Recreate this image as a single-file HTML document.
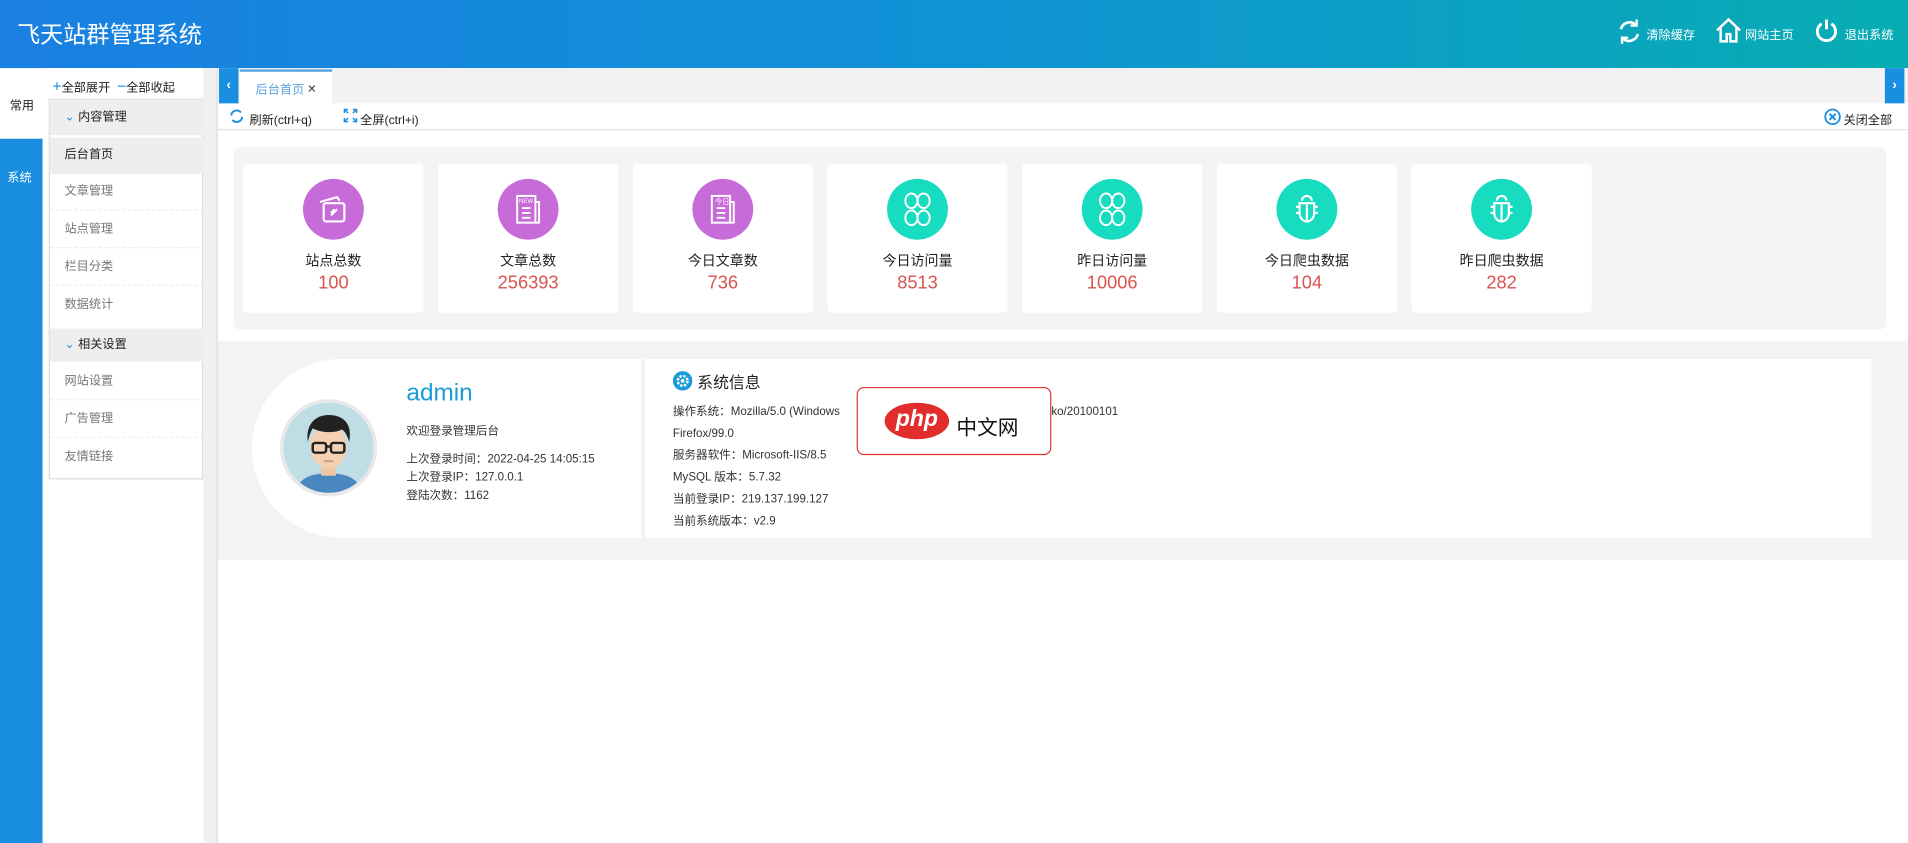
<!DOCTYPE html>
<html><head><meta charset="utf-8"><style>
*{margin:0;padding:0;box-sizing:border-box}
html,body{width:1908px;height:843px;overflow:hidden;background:#fff}
#w{width:1568px;height:693px;transform:scale(1.21684);transform-origin:0 0;position:relative;font-family:"Liberation Sans","Noto Sans CJK SC",sans-serif;font-size:11px;color:#333}
.a{position:absolute}
.hd{left:0;top:0;width:1568px;height:56px;background:linear-gradient(90deg,#1a80e2 0%,#1190d8 45%,#07adb3 100%)}
.hd .t{left:14px;top:14px;color:#fff;font-size:19px}
.hd .r{color:#fff;font-size:10px;top:20px}
.menu div{position:absolute;left:0;width:126px;height:30px;line-height:30px;padding-left:12px;color:#777;font-size:10px;border-bottom:1px dashed #eee}
.card{position:absolute;top:135px;width:148px;height:122px;background:#fff;border-radius:3px;text-align:center}
.card .c{width:50px;height:50px;border-radius:50%;margin:12px auto 0;display:flex;align-items:center;justify-content:center}
.card .l{margin-top:9px;font-size:11.5px;color:#222}
.card .n{font-size:15px;color:#d9534f;margin-top:2px}
.p{background:#c66bd8}.g{background:#17dcbf}
.si div{height:18px;line-height:18px;font-size:9.5px;color:#333}
</style></head><body><div id="w">
<div class="a hd"><div class="a t">飞天站群管理系统</div>
<svg class="a" style="left:1328px;top:15px" width="22" height="22" viewBox="0 0 22 22" fill="none" stroke="#fff" stroke-width="2.2"><path d="M4 9a7.5 7.5 0 0 1 13-3"/><path d="M18 13a7.5 7.5 0 0 1-13 3"/><path d="M17 1v5h-5" stroke-width="2"/><path d="M5 21v-5h5" stroke-width="2"/></svg>
<div class="a r" style="left:1353px">清除缓存</div>
<svg class="a" style="left:1409px;top:14px" width="23" height="22" viewBox="0 0 23 22" fill="none" stroke="#fff" stroke-width="2"><path d="M2 11L11.5 2 21 11"/><path d="M5 9v11h5v-6h3v6h5V9"/></svg>
<div class="a r" style="left:1434px">网站主页</div>
<svg class="a" style="left:1491px;top:15px" width="20" height="20" viewBox="0 0 20 20" fill="none" stroke="#fff" stroke-width="2.4"><path d="M6 4.5a7.5 7.5 0 1 0 8 0"/><path d="M10 1v8"/></svg>
<div class="a r" style="left:1516px">退出系统</div>
</div>
<div class="a" style="left:0;top:56px;width:35px;height:637px;background:#1a8ee0"></div>
<div class="a" style="left:0;top:56px;width:35px;height:58px;background:#fff"></div>
<div class="a" style="left:8px;top:78px;font-size:10px;color:#222">常用</div>
<div class="a" style="left:6px;top:137px;font-size:10px;color:#fff">系统</div>
<div class="a" style="left:35px;top:56px;width:144px;height:637px;background:#fff"></div>
<div class="a" style="left:167px;top:56px;width:12px;height:637px;background:#f0f0f0;border-right:1px solid #ddd"></div>
<div class="a" style="left:43px;top:63px;font-size:10px;color:#222"><span style="color:#1a8ee0;font-size:13px">+</span>全部展开 &nbsp;<span style="color:#1a8ee0;font-size:13px">−</span>全部收起</div>
<div class="a menu" style="left:40px;top:81px;width:127px;height:313px;border:1px solid #ddd;background:#fff">
<div style="top:0;height:29px;background:#eee;color:#222;border:0"><span style="color:#1a8ee0">⌄</span> 内容管理</div>
<div style="top:31px;background:#eee;color:#222;border:0">后台首页</div>
<div style="top:61px">文章管理</div>
<div style="top:92px">站点管理</div>
<div style="top:123px">栏目分类</div>
<div style="top:154px;border:0">数据统计</div>
<div style="top:188px;height:27px;line-height:27px;background:#eee;color:#222;border:0"><span style="color:#1a8ee0">⌄</span> 相关设置</div>
<div style="top:217px">网站设置</div>
<div style="top:248px">广告管理</div>
<div style="top:279px;border:0">友情链接</div>
</div>
<div class="a" style="left:179px;top:56px;width:1389px;height:29px;background:#f2f2f2"></div>
<div class="a" style="left:180px;top:56px;width:16px;height:29px;background:#1a8ee0;color:#fff;font-size:11px;line-height:29px;text-align:center;font-weight:bold">‹</div>
<div class="a" style="left:1549px;top:56px;width:16px;height:29px;background:#1a8ee0;color:#fff;font-size:11px;line-height:29px;text-align:center;font-weight:bold">›</div>
<div class="a" style="left:197px;top:57px;width:76px;height:28px;background:#fff;border-top:2px solid #5aa2e0;line-height:28px;padding-left:13px;color:#5aa2e0;font-size:10px">后台首页 <span style="color:#333;font-size:12px">×</span></div>
<div class="a" style="left:179px;top:85px;width:1389px;height:22px;background:#fff;border-bottom:1px solid #e2e2e2"></div>
<svg class="a" style="left:188px;top:89px" width="13" height="13" viewBox="0 0 13 13" fill="none" stroke="#1a8ee0" stroke-width="1.6"><path d="M2 6a4.5 4.5 0 0 1 8-2.5M11 7a4.5 4.5 0 0 1-8 2.5"/></svg>
<div class="a" style="left:205px;top:90px;font-size:10px;color:#222">刷新(ctrl+q)</div>
<svg class="a" style="left:282px;top:89px" width="12" height="12" viewBox="0 0 12 12" fill="none" stroke="#1a8ee0" stroke-width="1.2"><path d="M1 4V1h3M8 1h3v3M11 8v3H8M4 11H1V8M1 1l3 3M11 1L8 4M11 11L8 8M1 11l3-3"/></svg>
<div class="a" style="left:296px;top:90px;font-size:10px;color:#222">全屏(ctrl+i)</div>
<svg class="a" style="left:1499px;top:89px" width="14" height="14" viewBox="0 0 14 14"><circle cx="7" cy="7" r="6" fill="none" stroke="#1a8ee0" stroke-width="1.5"/><path d="M4.5 4.5l5 5M9.5 4.5l-5 5" stroke="#1a8ee0" stroke-width="1.6"/></svg>
<div class="a" style="left:1515px;top:90px;font-size:10px;color:#222">关闭全部</div>
<div class="a" style="left:192px;top:121px;width:1358px;height:150px;background:#f4f4f4;border-radius:6px"></div>
<div class="card" style="left:200px"><div class="c p"><svg width="28" height="26" viewBox="0 0 28 26" fill="none" stroke="#fff" stroke-width="1.8"><path d="M3 7l14-4 2 3"/><rect x="6" y="8" width="17" height="15" rx="2"/><path d="M12 18l5-5M12 16l3-3" /></svg></div><div class="l">站点总数</div><div class="n">100</div></div>
<div class="card" style="left:360px"><div class="c p"><svg width="26" height="28" viewBox="0 0 26 28" fill="none" stroke="#fff" stroke-width="1.6"><rect x="4" y="3" width="15" height="22"/><path d="M19 8h3v17h-3M8 13h7M8 17h7M8 21h7"/><text x="5.5" y="9" font-size="5" fill="#fff" stroke="none" font-family="Liberation Sans">NEW</text></svg></div><div class="l">文章总数</div><div class="n">256393</div></div>
<div class="card" style="left:520px"><div class="c p"><svg width="26" height="28" viewBox="0 0 26 28" fill="none" stroke="#fff" stroke-width="1.6"><rect x="4" y="3" width="15" height="22"/><path d="M19 8h3v17h-3M8 13h7M8 17h7M8 21h7"/><text x="6.5" y="9.5" font-size="6" fill="#fff" stroke="none" font-family="Noto Sans CJK SC">今日</text></svg></div><div class="l">今日文章数</div><div class="n">736</div></div>
<div class="card" style="left:680px"><div class="c g"><svg width="28" height="32" viewBox="0 0 28 32" fill="none" stroke="#fff" stroke-width="1.6"><ellipse cx="9" cy="9" rx="5" ry="6"/><ellipse cx="19" cy="9" rx="5" ry="6"/><ellipse cx="9" cy="23" rx="5" ry="6"/><ellipse cx="19" cy="23" rx="5" ry="6"/></svg></div><div class="l">今日访问量</div><div class="n">8513</div></div>
<div class="card" style="left:840px"><div class="c g"><svg width="28" height="32" viewBox="0 0 28 32" fill="none" stroke="#fff" stroke-width="1.6"><ellipse cx="9" cy="9" rx="5" ry="6"/><ellipse cx="19" cy="9" rx="5" ry="6"/><ellipse cx="9" cy="23" rx="5" ry="6"/><ellipse cx="19" cy="23" rx="5" ry="6"/></svg></div><div class="l">昨日访问量</div><div class="n">10006</div></div>
<div class="card" style="left:1000px"><div class="c g"><svg width="26" height="28" viewBox="0 0 26 28" fill="none" stroke="#fff" stroke-width="1.8"><path d="M9 7a4 4 0 0 1 8 0"/><path d="M7 9h12v8a6 7 0 0 1-12 0z"/><path d="M13 10v13M4 12h3M4 17h3M19 12h3M19 17h3"/></svg></div><div class="l">今日爬虫数据</div><div class="n">104</div></div>
<div class="card" style="left:1160px"><div class="c g"><svg width="26" height="28" viewBox="0 0 26 28" fill="none" stroke="#fff" stroke-width="1.8"><path d="M9 7a4 4 0 0 1 8 0"/><path d="M7 9h12v8a6 7 0 0 1-12 0z"/><path d="M13 10v13M4 12h3M4 17h3M19 12h3M19 17h3"/></svg></div><div class="l">昨日爬虫数据</div><div class="n">282</div></div>
<div class="a" style="left:179px;top:280px;width:1389px;height:180px;background:#f3f3f3"></div>
<div class="a" style="left:207px;top:295px;width:320px;height:147px;background:#fff;border-radius:80px 0 0 80px"></div>
<div class="a" style="left:530px;top:295px;width:1008px;height:147px;background:#fff"></div>
<div class="a" style="left:230px;top:328px;width:80px;height:80px;border-radius:50%;background:#bfdde4;border:3px solid #e8e8e8;overflow:hidden">
<svg width="74" height="74" viewBox="0 0 74 74"><path d="M10 74c2-12 12-16 27-16s25 4 27 16z" fill="#4a86c0"/><rect x="31" y="48" width="12" height="12" fill="#efc6a6"/><ellipse cx="37" cy="36" rx="15" ry="18" fill="#f5d1b3"/><path d="M20 32c-2-14 6-22 17-22s20 6 17 22c-2-6-4-9-6-10-6 3-16 3-24-1-2 3-3 7-4 11z" fill="#222"/><rect x="24" y="33" width="11" height="8" rx="2" fill="none" stroke="#222" stroke-width="2"/><rect x="39" y="33" width="11" height="8" rx="2" fill="none" stroke="#222" stroke-width="2"/><path d="M35 36h4" stroke="#222" stroke-width="2"/><path d="M33 48h8" stroke="#c98" stroke-width="1.5"/></svg></div>
<div class="a" style="left:334px;top:312px;font-size:20px;color:#1a9bd8">admin</div>
<div class="a" style="left:334px;top:346px;font-size:9.5px">欢迎登录管理后台</div>
<div class="a" style="left:334px;top:370px;font-size:9.5px;line-height:15px">上次登录时间：2022-04-25 14:05:15<br>上次登录IP：127.0.0.1<br>登陆次数：1162</div>
<svg class="a" style="left:553px;top:305px" width="16" height="16" viewBox="0 0 16 16"><circle cx="8" cy="8" r="8" fill="#1a9bd8"/><circle cx="8" cy="8" r="4" fill="none" stroke="#fff" stroke-width="2" stroke-dasharray="2 1.2"/><circle cx="8" cy="8" r="1.5" fill="#fff"/></svg>
<div class="a" style="left:573px;top:304px;font-size:13px;color:#222">系统信息</div>
<div class="a si" style="left:553px;top:330px"><div>操作系统：Mozilla/5.0 (Windows</div><div>Firefox/99.0</div><div>服务器软件：Microsoft-IIS/8.5</div><div>MySQL 版本：5.7.32</div><div>当前登录IP：219.137.199.127</div><div>当前系统版本：v2.9</div></div>
<div class="a si" style="left:864px;top:330px"><div>ko/20100101</div></div>
<div class="a" style="left:704px;top:318px;width:160px;height:56px;background:#fff;border:1px solid #d33;border-radius:6px"></div>
<div class="a" style="left:727px;top:331px;width:53px;height:30px;border-radius:50%;background:#e22d2d;color:#fff;font-size:19px;font-weight:bold;font-style:italic;text-align:center;line-height:28px">php</div>
<div class="a" style="left:786px;top:337px;font-size:17px;color:#111">中文网</div>
</div></body></html>
